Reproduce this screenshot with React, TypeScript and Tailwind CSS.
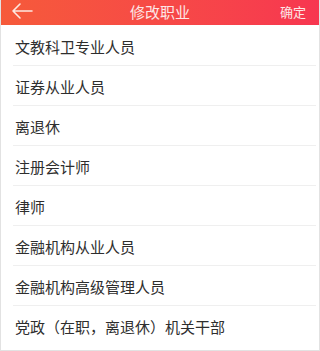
import React from "react";

const items = [
  "文教科卫专业人员",
  "证券从业人员",
  "离退休",
  "注册会计师",
  "律师",
  "金融机构从业人员",
  "金融机构高级管理人员",
  "党政（在职，离退休）机关干部",
];

export default function App() {
  return (
    <div
      className="w-[320px] h-[351px] bg-white overflow-hidden border-x border-b border-[#e2e2e2] box-border"
      style={{ fontFamily: '"Noto Sans CJK SC", "Noto Sans", sans-serif' }}
    >
      <div className="h-[25px] flex items-center justify-between px-[10px] bg-gradient-to-r from-[#f65a3a] to-[#f73650] relative">
        <svg width="22" height="16" viewBox="0 0 22 16" className="-mt-[3px]">
          <path d="M21 8H2M9 1L2 8l7 7" stroke="#fde8e0" strokeWidth="1.6" fill="none" strokeLinecap="round" strokeLinejoin="round" />
        </svg>
        <div className="absolute left-0 right-0 text-center text-[15px] text-[#fde6e6] leading-none -mt-[3px] pointer-events-none">
          修改职业
        </div>
        <div className="text-[13px] text-[#fde6e6] leading-none mr-[3px] -mt-[3px]">确定</div>
      </div>
      <div className="flex flex-col pt-[1px]">
        {items.map((t, i) => (
          <div key={i} className="h-[40px] flex items-center pl-[14px] relative">
            <span className="text-[15px] text-[#2e2e2e] leading-none">{t}</span>
            {i < items.length - 1 && (
              <div className="absolute left-[12px] right-[3px] bottom-0 h-px bg-[#efefef]" />
            )}
          </div>
        ))}
      </div>
    </div>
  );
}
